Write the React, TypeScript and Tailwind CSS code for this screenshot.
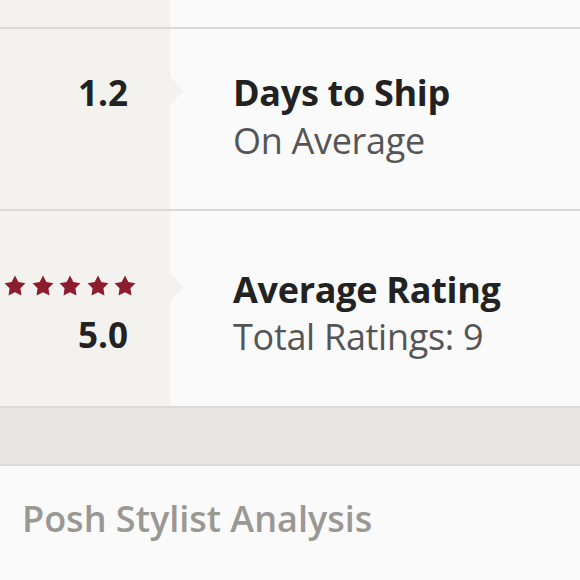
const font = { fontFamily: '"Open Sans", Lato, sans-serif' };

function StarIcon() {
  return (
    <svg viewBox="0 0 20 20" className="w-[22px] h-[22px]" fill="#8c1d2e">
      <path d="M10 0.5L13.06 6.29 19.51 7.41 14.95 12.11 15.88 18.59 10 15.7 4.12 18.59 5.05 12.11 0.49 7.41 6.94 6.29z" />
    </svg>
  );
}

function Arrow({ top }: { top: string }) {
  return (
    <div
      className={`absolute left-full ${top} w-0 h-0 border-y-[14px] border-y-transparent border-l-[14px] border-l-[#f4f2ee]`}
    />
  );
}

export default function App() {
  return (
    <div className="w-[580px] h-[580px] overflow-hidden bg-[#fafafa]" style={font}>
      <div className="grid grid-cols-[170px_1fr] h-[29px] border-b-2 border-[#dcdad6]">
        <div className="bg-[#f4f2ee]" />
        <div className="bg-[#fafafa]" />
      </div>

      {/* Days to ship */}
      <div className="grid grid-cols-[170px_1fr] h-[182px] border-b-2 border-[#dcdad6]">
        <div className="relative bg-[#f4f2ee] flex flex-col items-end pr-[42px] pt-[42px]">
          <p className="text-[35px] leading-[44px] font-bold text-[#222]">1.2</p>
          <Arrow top="top-[48px]" />
        </div>
        <div className="flex flex-col pl-[63px] pt-[42px]">
          <p className="text-[36px] leading-[44px] font-bold text-[#222] tracking-[-0.3px]">Days to Ship</p>
          <p className="text-[36px] leading-[44px] mt-[4px] text-[#555] tracking-[-0.3px]">On Average</p>
        </div>
      </div>

      {/* Average rating */}
      <div className="grid grid-cols-[170px_1fr] h-[197px] border-b-2 border-[#dcdad6]">
        <div className="relative bg-[#f4f2ee] flex flex-col items-end pt-[64px]">
          <div className="flex gap-[5.5px] pr-[34px]">
            {[0, 1, 2, 3, 4].map((i) => (
              <StarIcon key={i} />
            ))}
          </div>
          <p className="text-[35px] leading-[44px] font-bold text-[#222] mt-[16px] pr-[42px]">5.0</p>
          <Arrow top="top-[62px]" />
        </div>
        <div className="flex flex-col pl-[63px] pt-[57px]">
          <p className="text-[36px] leading-[44px] font-bold text-[#222] tracking-[-0.3px]">Average Rating</p>
          <p className="text-[36px] leading-[44px] mt-[3px] text-[#555] tracking-[-0.3px]">Total Ratings: 9</p>
        </div>
      </div>

      <div className="h-[58px] bg-[#e9e7e3] border-b-2 border-[#dcdad6]" />

      <div className="px-[22px] pt-[31px]">
        <h2 className="text-[36px] leading-[44px] font-semibold text-[#9a9893]">Posh Stylist Analysis</h2>
      </div>
    </div>
  );
}
